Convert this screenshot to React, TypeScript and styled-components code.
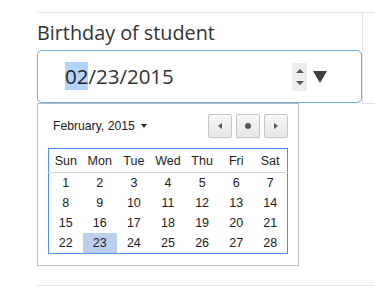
import styled, { createGlobalStyle } from 'styled-components'
import { FC } from 'react'

const GlobalStyle = createGlobalStyle`
  html, body {
    margin: 0;
    padding: 0;
    background: #fff;
  }
`

const weekDays = ['Sun', 'Mon', 'Tue', 'Wed', 'Thu', 'Fri', 'Sat']
const weeks = [
  [1, 2, 3, 4, 5, 6, 7],
  [8, 9, 10, 11, 12, 13, 14],
  [15, 16, 17, 18, 19, 20, 21],
  [22, 23, 24, 25, 26, 27, 28],
]
const selectedDay = 23

const Row = styled.div`
  display: flex;
  margin: 12px 0 0 37px;
  border-top: 1px solid #e3e3e3;
`

const FieldCell = styled.div`
  width: 325px;
  height: 272px;
  flex: 0 0 auto;
`

const SideCell = styled.div`
  flex: 1;
  height: 90px;
  border-left: 1px solid #e3e3e3;
  border-bottom: 1px solid #e3e3e3;
`

const NextRow = styled.div`
  margin-left: 37px;
  border-top: 1px solid #e3e3e3;
  height: 11px;
`

const Label = styled.div`
  font-family: 'Open Sans', sans-serif;
  font-size: 19.8px;
  line-height: 28px;
  color: #333;
  margin-top: 6px;
  margin-bottom: 3px;
`

const InputWrap = styled.div`
  position: relative;
`

const DateInput = styled.div`
  box-sizing: border-box;
  display: flex;
  align-items: center;
  height: 53px;
  width: 325px;
  padding: 0 34px 0 27px;
  border: 1px solid #66afe9;
  border-radius: 5px;
  font-family: 'Open Sans', sans-serif;
  font-size: 20.5px;
  color: #333;
`

const DateText = styled.span`
  flex: 1;
  line-height: 29px;
`

const Segment = styled.span<{ $selected?: boolean }>`
  background: ${(p) => (p.$selected ? '#b3d4fc' : 'transparent')};
  color: ${(p) => (p.$selected ? '#222' : 'inherit')};
`

const Spinner = styled.div`
  width: 15px;
  height: 28px;
  background: #ececec;
  display: flex;
  flex-direction: column;
  align-items: center;
  justify-content: space-between;
  padding: 6px 0;
  box-sizing: border-box;
  margin-right: 6px;
`

const Arrow = styled.div<{ $dir: 'up' | 'down' }>`
  width: 0;
  height: 0;
  border-left: 4px solid transparent;
  border-right: 4px solid transparent;
  ${(p) => (p.$dir === 'up' ? 'border-bottom: 4px solid #555;' : 'border-top: 4px solid #555;')}
`

const DropArrow = styled.div`
  width: 0;
  height: 0;
  border-left: 7px solid transparent;
  border-right: 7px solid transparent;
  border-top: 12px solid #3f3f3f;
`

const Popup = styled.div`
  position: absolute;
  top: 53px;
  left: 0;
  box-sizing: border-box;
  width: 262px;
  padding: 10px 10px 11px 10px;
  border: 1px solid #bcbcbc;
  background: #fff;
  font-family: 'Liberation Sans', Arial, sans-serif;
  color: #222;
`

const CalHeader = styled.div`
  display: flex;
  align-items: center;
  height: 24px;
  margin-bottom: 10px;
`

const Month = styled.div`
  flex: 1;
  display: flex;
  align-items: center;
  gap: 6px;
  padding-left: 5px;
  font-size: 12.2px;
  color: #222;
`

const Caret = styled.span`
  width: 0;
  height: 0;
  border-left: 3.5px solid transparent;
  border-right: 3.5px solid transparent;
  border-top: 4px solid #333;
`

const NavButtons = styled.div`
  display: flex;
  gap: 4px;
`

const NavButton = styled.button`
  box-sizing: border-box;
  width: 24px;
  height: 24px;
  padding: 0;
  display: flex;
  align-items: center;
  justify-content: center;
  border: 1px solid #c6c6c6;
  border-radius: 2px;
  background: linear-gradient(#f8f8f8, #e6e6e6);
  box-shadow: 0 1px 1px rgba(0, 0, 0, 0.06);
`

const Tri = styled.span<{ $dir: 'left' | 'right' }>`
  width: 0;
  height: 0;
  border-top: 3.5px solid transparent;
  border-bottom: 3.5px solid transparent;
  ${(p) => (p.$dir === 'left' ? 'border-right: 4px solid #555;' : 'border-left: 4px solid #555;')}
`

const Dot = styled.span`
  width: 6px;
  height: 6px;
  border-radius: 50%;
  background: #555;
`

const Table = styled.table`
  width: 240px;
  border-collapse: collapse;
  border: 1px solid #4d8ff5;
  table-layout: fixed;
  font-size: 12.5px;
`

const HeadCell = styled.th`
  height: 23px;
  padding: 0;
  font-weight: normal;
  text-align: center;
  border-bottom: 1px solid #d0d0d0;
`

const DayCell = styled.td<{ $selected?: boolean }>`
  height: 20px;
  padding: 0;
  text-align: center;
  background: ${(p) => (p.$selected ? '#bccfee' : 'transparent')};
`

const Calendar: FC = () => (
  <Popup>
    <CalHeader>
      <Month>
        February, 2015 <Caret />
      </Month>
      <NavButtons>
        <NavButton>
          <Tri $dir='left' />
        </NavButton>
        <NavButton>
          <Dot />
        </NavButton>
        <NavButton>
          <Tri $dir='right' />
        </NavButton>
      </NavButtons>
    </CalHeader>
    <Table>
      <thead>
        <tr>
          {weekDays.map((d) => (
            <HeadCell key={d}>{d}</HeadCell>
          ))}
        </tr>
      </thead>
      <tbody>
        {weeks.map((week, i) => (
          <tr key={i}>
            {week.map((day) => (
              <DayCell key={day} $selected={day === selectedDay}>
                {day}
              </DayCell>
            ))}
          </tr>
        ))}
      </tbody>
    </Table>
  </Popup>
)

export default function App() {
  return (
    <>
      <GlobalStyle />
      <Row>
        <FieldCell>
          <Label>Birthday of student</Label>
          <InputWrap>
            <DateInput>
              <DateText>
                <Segment $selected>02</Segment>/23/2015
              </DateText>
              <Spinner>
                <Arrow $dir='up' />
                <Arrow $dir='down' />
              </Spinner>
              <DropArrow />
            </DateInput>
            <Calendar />
          </InputWrap>
        </FieldCell>
        <SideCell />
      </Row>
      <NextRow />
    </>
  )
}
